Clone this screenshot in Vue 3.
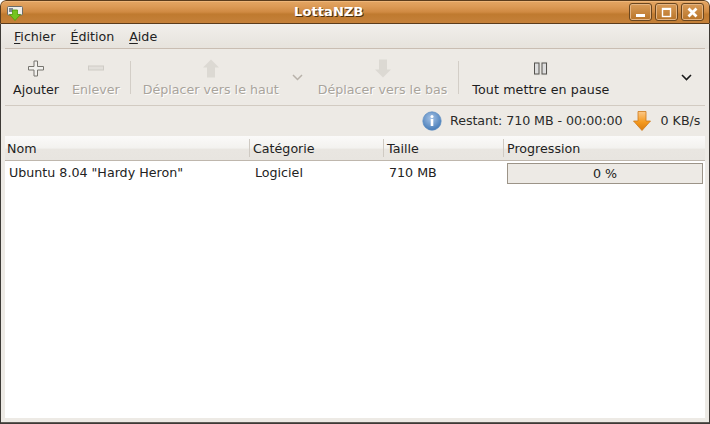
<script setup>
const menus = [
  { key: 'F', rest: 'ichier' },
  { key: 'É', rest: 'dition' },
  { key: 'A', rest: 'ide' }
]
const columns = [
  { name: 'Nom', width: 244 },
  { name: 'Catégorie', width: 134 },
  { name: 'Taille', width: 120 },
  { name: 'Progression', width: 202 }
]
</script>

<template>
  <div class="window">
    <header class="titlebar">
      <svg class="app-icon" width="20" height="20" viewBox="0 0 20 20">
        <rect x="1.5" y="3.5" width="15" height="8.500" rx="1" fill="#eeeeec" stroke="#6b6b66" />
        <rect x="3" y="5" width="4" height="4" fill="#7f8a94" />
        <path d="M6.500 7h5v4.500h3L9 17.500l-5.500-6h3z" fill="#74c41f" stroke="#4e9a06" stroke-width=".8" />
      </svg>
      <span class="title">LottaNZB</span>
      <div class="win-buttons">
        <button class="win-btn"><svg width="13" height="13" viewBox="0 0 13 13"><rect x="2" y="8" width="9" height="3" fill="#fff" /></svg></button>
        <button class="win-btn"><svg width="13" height="13" viewBox="0 0 13 13"><rect x="2.500" y="2.500" width="8" height="8" fill="none" stroke="#fff" stroke-width="1.400" /><rect x="2" y="2" width="9" height="2" fill="#fff" /></svg></button>
        <button class="win-btn"><svg width="13" height="13" viewBox="0 0 13 13"><path d="M2.500 2.500l8 8M10.500 2.500l-8 8" stroke="#fff" stroke-width="2.800" /></svg></button>
      </div>
    </header>

    <div class="content">
      <nav class="menubar">
        <span v-for="m in menus" :key="m.key" class="menu"><u>{{ m.key }}</u>{{ m.rest }}</span>
      </nav>

      <div class="toolbar">
        <button class="tool add">
          <svg width="18" height="18" viewBox="0 0 18 18"><path d="M7 1.500h3.500v5.500h6v3.500h-6v6H7v-6H1.500V7H7z" fill="#f2f1ee" stroke="#77756f" /></svg>
          <span>Ajouter</span>
        </button>
        <button class="tool off remove">
          <svg width="18" height="18" viewBox="0 0 18 18"><rect x="1.500" y="6.500" width="15" height="4" fill="#e2dfda" stroke="#cfccc6" /></svg>
          <span>Enlever</span>
        </button>
        <i class="tool-sep sep-one"></i>
        <button class="tool off up">
          <svg width="18" height="19" viewBox="0 0 18 19"><path d="M9 .5l8 8h-4v10H5v-10H1z" fill="#dcd9d3" /></svg>
          <span>Déplacer vers le haut</span>
        </button>
        <svg class="chevron" width="11" height="7" viewBox="0 0 11 7"><path d="M1 1l4.500 4.500L10 1" fill="none" stroke="#b8b2aa" stroke-width="1.500" /></svg>
        <button class="tool off down">
          <svg width="18" height="19" viewBox="0 0 18 19"><path d="M5 .5h8v10h4l-8 8-8-8h4z" fill="#dcd9d3" /></svg>
          <span>Déplacer vers le bas</span>
        </button>
        <i class="tool-sep sep-two"></i>
        <button class="tool pause">
          <svg width="14" height="14" viewBox="0 0 14 14"><rect width="14" height="14" fill="#e6e4df" /><rect x=".5" y="1.500" width="4.500" height="11" fill="#ddd" stroke="#55534f" /><rect x="8" y="1.500" width="4.500" height="11" fill="#ddd" stroke="#55534f" /></svg>
          <span>Tout mettre en pause</span>
        </button>
        <svg class="chevron end" width="11" height="7" viewBox="0 0 11 7"><path d="M1 1l4.500 4.500L10 1" fill="none" stroke="#1a1a1a" stroke-width="1.600" /></svg>
      </div>

      <div class="status">
        <svg class="info" width="20" height="20" viewBox="0 0 20 20">
          <defs>
            <radialGradient id="infoFill" cx="45%" cy="35%" r="70%"><stop offset="0" stop-color="#a5c3e6" /><stop offset="1" stop-color="#3f76b4" /></radialGradient>
          </defs>
          <circle cx="10" cy="10" r="9.200" fill="url(#infoFill)" stroke="#5c8cc2" stroke-width=".7" />
          <circle cx="10" cy="5.500" r="1.500" fill="#fff" />
          <rect x="8.700" y="8" width="2.600" height="7" fill="#fff" />
        </svg>
        <span class="remaining">Restant: 710 MB - 00:00:00</span>
        <svg class="arrow" width="18" height="20" viewBox="0 0 18 20">
          <defs>
            <linearGradient id="arrowFill" x1="0" y1="0" x2="0" y2="1"><stop offset="0" stop-color="#fbc98a" /><stop offset=".55" stop-color="#f59a1f" /><stop offset="1" stop-color="#d97a0c" /></linearGradient>
          </defs>
          <path d="M5 .5h8v9.500h4.500L9 19.500.5 10H5z" fill="url(#arrowFill)" stroke="#ce7a1b" stroke-width=".8" />
        </svg>
        <span class="speed">0 KB/s</span>
      </div>

      <section class="table">
        <div class="thead">
          <div v-for="c in columns" :key="c.name" class="th" :style="{ width: c.width + 'px' }">{{ c.name }}</div>
        </div>
        <div class="row">
          <div class="td name">Ubuntu 8.04 "Hardy Heron"</div>
          <div class="td cat">Logiciel</div>
          <div class="td size">710 MB</div>
          <div class="td prog"><div class="bar">0 %</div></div>
        </div>
      </section>
    </div>
  </div>
</template>

<style>
html, body { margin: 0; padding: 0; background: #fff; }
</style>

<style scoped>
* { box-sizing: border-box; }
.window {
  width: 710px;
  height: 424px;
  display: flex;
  flex-direction: column;
  overflow: hidden;
  background: #edeae5;
  border-radius: 6px 6px 0 0;
  font: 12.67px/16px "DejaVu Sans", sans-serif;
  color: #222;
}
.titlebar {
  height: 24px;
  flex: none;
  display: flex;
  align-items: center;
  position: relative;
  border: 1px solid #5b3c1c;
  border-radius: 6px 6px 0 0;
  background: linear-gradient(#e4a664 0, #dc9a55 25%, #d08a42 50%, #bf7a2f 60%, #c5813a 100%);
  box-shadow: inset 0 1px #eeb679;
}
.app-icon { position: absolute; left: 5px; top: 2px; }
.title {
  position: absolute;
  left: 293px;
  top: 3px;
  font-size: 13px;
  font-weight: 700;
  color: #fff;
  letter-spacing: .1px;
  text-shadow: 1px 1px 0 #4a2e10;
}
.win-buttons {
  position: absolute;
  left: 628px;
  top: 2px;
  display: flex;
  gap: 3px;
}
.win-btn {
  width: 23px;
  height: 18px;
  padding: 0;
  display: flex;
  align-items: center;
  justify-content: center;
  background: linear-gradient(#d99b58, #b87428);
  border: 1px solid #6a461f;
  border-radius: 3px;
  box-shadow: inset 0 0 0 1px #e4b482;
}
.content {
  flex: 1;
  min-height: 0;
  display: flex;
  flex-direction: column;
  padding: 0 4px 5px;
  border: solid #3d3a36;
  border-width: 0 1px 1px 1px;
  box-shadow: inset 0 -1px #5f5c57;
}
.menubar {
  height: 25px;
  flex: none;
  margin: 0 -4px;
  padding: 0 0 0 13px;
  display: flex;
  align-items: center;
  gap: 15px;
  background: linear-gradient(#f1efeb, #e6e2dc);
  position: relative;
}
.menubar::after {
  content: "";
  position: absolute;
  left: 4px;
  right: 4px;
  bottom: 0;
  height: 1px;
  background: #c9bdb2;
}
.menu u { text-underline-offset: 2px; }
.toolbar {
  height: 57px;
  flex: none;
  display: flex;
  align-items: stretch;
  border-bottom: 1px solid #d2cbc2;
  padding-left: 8px;
}
.tool {
  border: 0;
  background: none;
  padding: 10px 0 0;
  font: inherit;
  color: #1e1e1e;
  display: flex;
  flex-direction: column;
  align-items: center;
  white-space: nowrap;
}
.tool svg { height: 19px; display: block; margin-bottom: 4px; }
.tool span { display: block; }
.off span { color: #a9a49c; text-shadow: 1px 1px 0 #fff; }
.remove { margin-left: 13px; }
.tool-sep {
  width: 1px;
  height: 33px;
  margin-top: 12px;
  background: #d3cec7;
}
.sep-one { margin-left: 10px; }
.up { margin-left: 12px; }
.chevron {
  margin: 25px 0 0 13px;
  flex: none;
}
.down { margin-left: 15px; }
.sep-two { margin-left: 11px; }
.pause { margin-left: 13px; letter-spacing: .1px; }
.end { margin-left: 72px; }
.status {
  height: 30px;
  flex: none;
  display: flex;
  align-items: center;
  padding-left: 417px;
  color: #2a2a2a;
  white-space: nowrap;
}
.info { flex: none; }
.remaining { margin-left: 8px; letter-spacing: -.05px; }
.arrow { margin: 0 10px 0 10px; flex: none; }
.table {
  flex: 1;
  background: #fff;
}
.thead {
  height: 25px;
  display: flex;
  border-bottom: 1px solid #bfb7ad;
  background: linear-gradient(#fbfaf9 0, #f3f2ef 50%, #e9e6e1 55%, #e8e5e0 100%);
}
.th {
  padding: 5px 0 0 2px;
  height: 24px;
  flex: none;
  position: relative;
}
.th + .th { padding-left: 4px; }
.th + .th::before {
  content: "";
  position: absolute;
  left: 0;
  top: 3px;
  bottom: 3px;
  width: 1px;
  background: #cfcac3;
}
.row {
  height: 23px;
  display: flex;
  align-items: center;
  padding-top: 1px;
}
.td { flex: none; white-space: nowrap; }
.name { width: 250px; padding-left: 4px; }
.cat { width: 134px; }
.size { width: 118px; }
.prog { width: 198px; }
.bar {
  width: 196px;
  height: 21px;
  background: #edeae5;
  border: 1px solid #9c9488;
  text-align: center;
  line-height: 19px;
}
</style>
